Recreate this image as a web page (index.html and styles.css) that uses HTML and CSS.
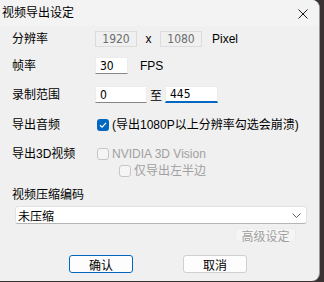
FILE: index.html
```html
<!DOCTYPE html>
<html lang="zh-CN">
<head>
    <meta charset="UTF-8">
    <title>视频导出设定</title>
    <link rel="stylesheet" href="styles.css">
</head>
<body>

    <div class="dialog">
        <div class="title-bar">
            <span class="title">视频导出设定</span>
            <svg class="close-icon" width="10" height="10" viewBox="0 0 10 10">
                <path d="M0.5 0.5 L9.5 9.5 M9.5 0.5 L0.5 9.5" stroke="#1a1a1a" stroke-width="1" fill="none"/>
            </svg>
        </div>

        <div class="content">
            <div class="row row-res">
                <span class="label">分辨率</span>
                <span class="box box-disabled">1920</span>
                <span class="sep">x</span>
                <span class="box box-disabled">1080</span>
                <span class="unit">Pixel</span>
            </div>

            <div class="row row-fps">
                <span class="label">帧率</span>
                <span class="box box-edit box-short">30</span>
                <span class="unit unit-fps">FPS</span>
            </div>

            <div class="row row-range">
                <span class="label">录制范围</span>
                <span class="box box-edit box-range">0</span>
                <span class="sep-to">至</span>
                <span class="box box-edit box-range box-focus">445</span>
            </div>

            <div class="row row-audio">
                <span class="label">导出音频</span>
                <span class="check check-on">
                    <svg width="8" height="8" viewBox="0 0 8 8">
                        <path d="M1 4.2 L3.1 6.2 L7 1.8" stroke="#fff" stroke-width="1.2" fill="none"/>
                    </svg>
                </span>
                <span class="check-text">(导出1080P以上分辨率勾选会崩溃)</span>
            </div>

            <div class="row row-3d">
                <span class="label">导出3D视频</span>
                <span class="check check-off"></span>
                <span class="check-text muted">NVIDIA 3D Vision</span>
            </div>

            <div class="row row-left">
                <span class="check check-off"></span>
                <span class="check-text muted">仅导出左半边</span>
            </div>

            <div class="row row-codec">
                <span class="label">视频压缩编码</span>
            </div>

            <div class="select">
                <span>未压缩</span>
                <svg width="9" height="5" viewBox="0 0 9 5">
                    <path d="M0.5 0.5 L4.5 4.5 L8.5 0.5" stroke="#606060" stroke-width="1" fill="none"/>
                </svg>
            </div>

            <div class="row row-adv">
                <span class="btn-adv">高级设定</span>
            </div>

            <div class="row row-buttons">
                <span class="btn btn-default">确认</span>
                <span class="btn">取消</span>
            </div>
        </div>
    </div>

</body>
</html>
```

FILE: styles.css
```css
/* Basic reset */
* {
    margin: 0;
    padding: 0;
    box-sizing: border-box;
}

body {
    width: 324px;
    height: 282px;
    overflow: hidden;
    background-color: #3a3232; /* desktop behind the dialog */
    font-family: 'Liberation Sans', 'Noto Sans CJK SC', sans-serif;
    font-size: 12px;
    color: #000000;
}

/* Dialog window */
.dialog {
    width: 320px;
    height: 281px;
    background-color: #f0f0f0;
    border-radius: 0 8px 8px 0;
    border-right: 1px solid #9a9a9a;
    overflow: hidden;
}

.title-bar {
    height: 26px;
    display: flex;
    align-items: center;
    justify-content: space-between;
    padding: 0 11px 0 2px;
    background-color: #f3f3f3;
}

.title {
    font-size: 12px;
    line-height: 14px;
}

.close-icon {
    display: block;
    margin-top: 1px;
}

.content {
    padding-left: 12px;
}

/* Rows */
.row {
    display: flex;
    align-items: center;
}

.label {
    width: 83px;
    flex-shrink: 0;
    line-height: 14px;
}

.row-res { height: 16px; margin-top: 5px; }
.row-fps { height: 17px; margin-top: 10px; }
.row-range { height: 17px; margin-top: 12px; }
.row-audio { height: 18px; margin-top: 13px; }
.row-3d { height: 18px; margin-top: 11px; }
.row-left { height: 16px; padding-left: 105px; }
.row-codec { height: 16px; margin-top: 8px; }

/* Text boxes */
.box {
    height: 100%;
    display: flex;
    align-items: center;
    font-family: 'DejaVu Sans Condensed', 'Liberation Sans', sans-serif;
    font-size: 12px;
}

.box-disabled {
    width: 42px;
    justify-content: center;
    border: 1px solid #dcdcdc;
    color: #6d6d6d;
}

.box-edit {
    background-color: #ffffff;
    border: 1px solid #ececec;
    border-bottom: 1px solid #868686;
    padding-left: 4px;
}

.box-short { width: 33px; }
.box-range { width: 52px; }
.box-range.box-focus { width: 53px; }

.box-focus {
    border-bottom: 2px solid #0067c0;
}

.sep {
    width: 23px;
    text-align: center;
}

.sep-to {
    width: 18px;
    text-align: center;
}

.unit {
    margin-left: 10px;
}

.unit-fps {
    margin-left: 12px;
}

/* Checkboxes */
.check {
    width: 12px;
    height: 12px;
    border-radius: 3px;
    margin-left: 2px;
    flex-shrink: 0;
    display: flex;
    align-items: center;
    justify-content: center;
}

.check-on {
    background-color: #0067c0;
}

.check-off {
    border: 1px solid #c6c6c6;
    background-color: #f5f5f5;
}

.check-text {
    margin-left: 3px;
    white-space: nowrap;
    line-height: 14px;
}

.muted {
    color: #a0a0a0;
}

/* Codec dropdown */
.select {
    width: 292px;
    height: 18px;
    margin: 3px 0 0 3px;
    background-color: #ffffff;
    border: 1px solid #e2e2e2;
    border-bottom: 1px solid #b5b5b5;
    border-radius: 3px;
    display: flex;
    align-items: center;
    justify-content: space-between;
    padding: 0 5px 0 2px;
}

.row-adv {
    height: 14px;
    margin-top: 4px;
    justify-content: flex-end;
    padding-right: 23px;
}

.btn-adv {
    width: 61px;
    height: 14px;
    border-radius: 3px;
    background-color: #f5f5f5;
    border: 1px solid #ececec;
    color: #a0a0a0;
    display: flex;
    align-items: center;
    justify-content: center;
}

/* Bottom buttons */
.row-buttons {
    height: 18px;
    margin-top: 13px;
    padding-left: 57px;
    gap: 50px;
}

.btn {
    width: 64px;
    height: 18px;
    border-radius: 3px;
    background-color: #fdfdfd;
    border: 1px solid #d0d0d0;
    display: flex;
    align-items: center;
    justify-content: center;
}

.btn-default {
    border: 1px solid #0067c0;
}
```
